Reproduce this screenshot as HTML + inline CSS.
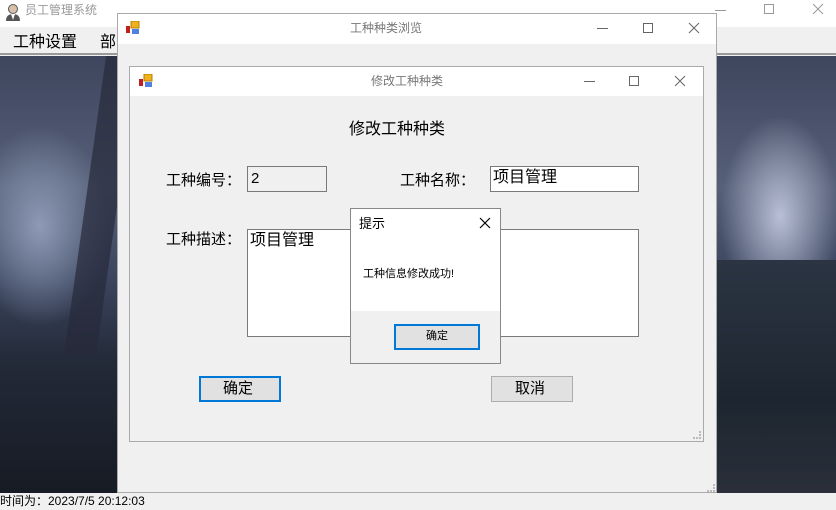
<!DOCTYPE html>
<html><head><meta charset="utf-8"><style>
*{margin:0;padding:0;box-sizing:border-box}
body{width:836px;height:510px;overflow:hidden;position:relative;font-family:"Liberation Sans","Noto Sans CJK SC",sans-serif;background:#f0f0f0}
.a{position:absolute}
.t{white-space:nowrap;color:#000;line-height:1.2}
</style></head><body>
<div class="a" style="left:0;top:0;width:836px;height:27px;background:#fff"></div>
<svg class="a" style="left:4px;top:3px" width="18" height="18"><circle cx="9" cy="6" r="4.5" fill="#d8c0a8" stroke="#555"/><path d="M2 18 Q2 11 9 11 Q16 11 16 18Z" fill="#555"/><path d="M7 11 L9 17 L11 11Z" fill="#fff"/></svg>
<div class="a t" style="left:25px;top:3px;font-size:12px;color:#999">员工管理系统</div>
<div class="a" style="left:715px;top:10px;width:11px;height:1px;background:#999"></div>
<div class="a" style="left:764px;top:4px;width:10px;height:10px;border:1px solid #999"></div>
<svg class="a" style="left:812px;top:3px" width="12" height="12"><path d="M1 1L11 11M11 1L1 11" stroke="#999" stroke-width="1"/></svg>
<div class="a" style="left:0;top:27px;width:836px;height:28px;background:#f0f0f0;border-bottom:2px solid #999"></div>
<div class="a t" style="left:13px;top:33px;font-size:16px">工种设置</div>
<div class="a t" style="left:100px;top:33px;font-size:16px">部</div>
<div class="a" style="left:0;top:56px;width:836px;height:437px;background:
radial-gradient(ellipse 70px 100px at 40px 170px,#8e9ab6 0%,rgba(120,130,160,0) 100%),
radial-gradient(ellipse 60px 100px at 780px 160px,#b8bfd6 0%,rgba(150,160,190,0) 100%),
linear-gradient(180deg,#3e465e 0%,#566078 30%,#3c4660 50%,#232a38 70%,#161b24 100%)"></div>
<div class="a" style="left:85px;top:56px;width:32px;height:300px;background:#262a3a;transform:skewX(-8deg);opacity:.7"></div>
<div class="a" style="left:717px;top:260px;width:119px;height:233px;background:linear-gradient(180deg,#2b3442,#1d2630 60%,#2a2f3a)"></div>
<div class="a" style="left:0;top:493px;width:836px;height:17px;background:#f0f0f0"></div>
<div class="a t" style="left:0;top:494px;font-size:12px">时间为：2023/7/5 20:12:03</div>
<div class="a" style="left:117px;top:13px;width:600px;height:480px;background:#f0f0f0;border:1px solid #aaa"></div>
<div class="a" style="left:118px;top:14px;width:598px;height:30px;background:#fff"></div>
<svg class="a" style="left:126px;top:21px" width="14" height="14"><rect x="5" y="0" width="8" height="7" fill="#f0b020" stroke="#b08000"/><rect x="0" y="5" width="4" height="7" fill="#c02020"/><rect x="6" y="8" width="7" height="5" fill="#5080e0"/></svg>
<div class="a t" style="left:350px;top:21px;font-size:12px;color:#777">工种种类浏览</div>
<div class="a" style="left:597px;top:28px;width:11px;height:1px;background:#666"></div>
<div class="a" style="left:643px;top:23px;width:10px;height:10px;border:1px solid #666"></div>
<svg class="a" style="left:688px;top:22px" width="12" height="12"><path d="M1 1L11 11M11 1L1 11" stroke="#666" stroke-width="1"/></svg>
<div class="a" style="left:707px;top:484px;width:8px;height:8px;border-right:2px dotted #bbb;border-bottom:2px dotted #bbb"></div>
<div class="a" style="left:129px;top:66px;width:575px;height:376px;background:#f0f0f0;border:1px solid #aaa"></div>
<div class="a" style="left:130px;top:67px;width:573px;height:29px;background:#fff"></div>
<svg class="a" style="left:139px;top:74px" width="14" height="14"><rect x="5" y="0" width="8" height="7" fill="#f0b020" stroke="#b08000"/><rect x="0" y="5" width="4" height="7" fill="#c02020"/><rect x="6" y="8" width="7" height="5" fill="#5080e0"/></svg>
<div class="a t" style="left:371px;top:74px;font-size:12px;color:#777">修改工种种类</div>
<div class="a" style="left:584px;top:81px;width:11px;height:1px;background:#666"></div>
<div class="a" style="left:629px;top:76px;width:10px;height:10px;border:1px solid #666"></div>
<svg class="a" style="left:674px;top:75px" width="12" height="12"><path d="M1 1L11 11M11 1L1 11" stroke="#666" stroke-width="1"/></svg>
<div class="a" style="left:693px;top:431px;width:8px;height:8px;border-right:2px dotted #bbb;border-bottom:2px dotted #bbb"></div>
<div class="a t" style="left:349px;top:120px;font-size:16px">修改工种种类</div>
<div class="a t" style="left:166px;top:172px;font-size:15px">工种编号：</div>
<div class="a" style="left:247px;top:166px;width:80px;height:26px;border:1px solid #7a7a7a;background:#f0f0f0"></div>
<div class="a t" style="left:251px;top:170px;font-size:15px">2</div>
<div class="a t" style="left:400px;top:172px;font-size:15px">工种名称：</div>
<div class="a" style="left:490px;top:166px;width:149px;height:26px;border:1px solid #7a7a7a;background:#fff"></div>
<div class="a t" style="left:493px;top:168px;font-size:16px">项目管理</div>
<div class="a t" style="left:166px;top:231px;font-size:15px">工种描述：</div>
<div class="a" style="left:247px;top:229px;width:392px;height:108px;border:1px solid #7a7a7a;background:#fff"></div>
<div class="a t" style="left:250px;top:231px;font-size:16px">项目管理</div>
<div class="a" style="left:199px;top:376px;width:82px;height:26px;border:2px solid #0078d7;background:#e1e1e1"></div>
<div class="a t" style="left:223px;top:380px;font-size:15px">确定</div>
<div class="a" style="left:491px;top:376px;width:82px;height:26px;border:1px solid #adadad;background:#e1e1e1"></div>
<div class="a t" style="left:515px;top:380px;font-size:15px">取消</div>
<div class="a" style="left:350px;top:208px;width:151px;height:156px;border:1px solid #888;background:#fff"></div>
<div class="a" style="left:351px;top:311px;width:149px;height:52px;background:#f0f0f0"></div>
<div class="a t" style="left:359px;top:216px;font-size:13px">提示</div>
<svg class="a" style="left:479px;top:217px" width="12" height="12"><path d="M1 1L11 11M11 1L1 11" stroke="#000" stroke-width="1.2"/></svg>
<div class="a t" style="left:363px;top:268px;font-size:11px">工种信息修改成功!</div>
<div class="a" style="left:394px;top:324px;width:86px;height:26px;border:2px solid #0078d7;background:#e1e1e1"></div>
<div class="a t" style="left:426px;top:330px;font-size:11px">确定</div>
</body></html>
